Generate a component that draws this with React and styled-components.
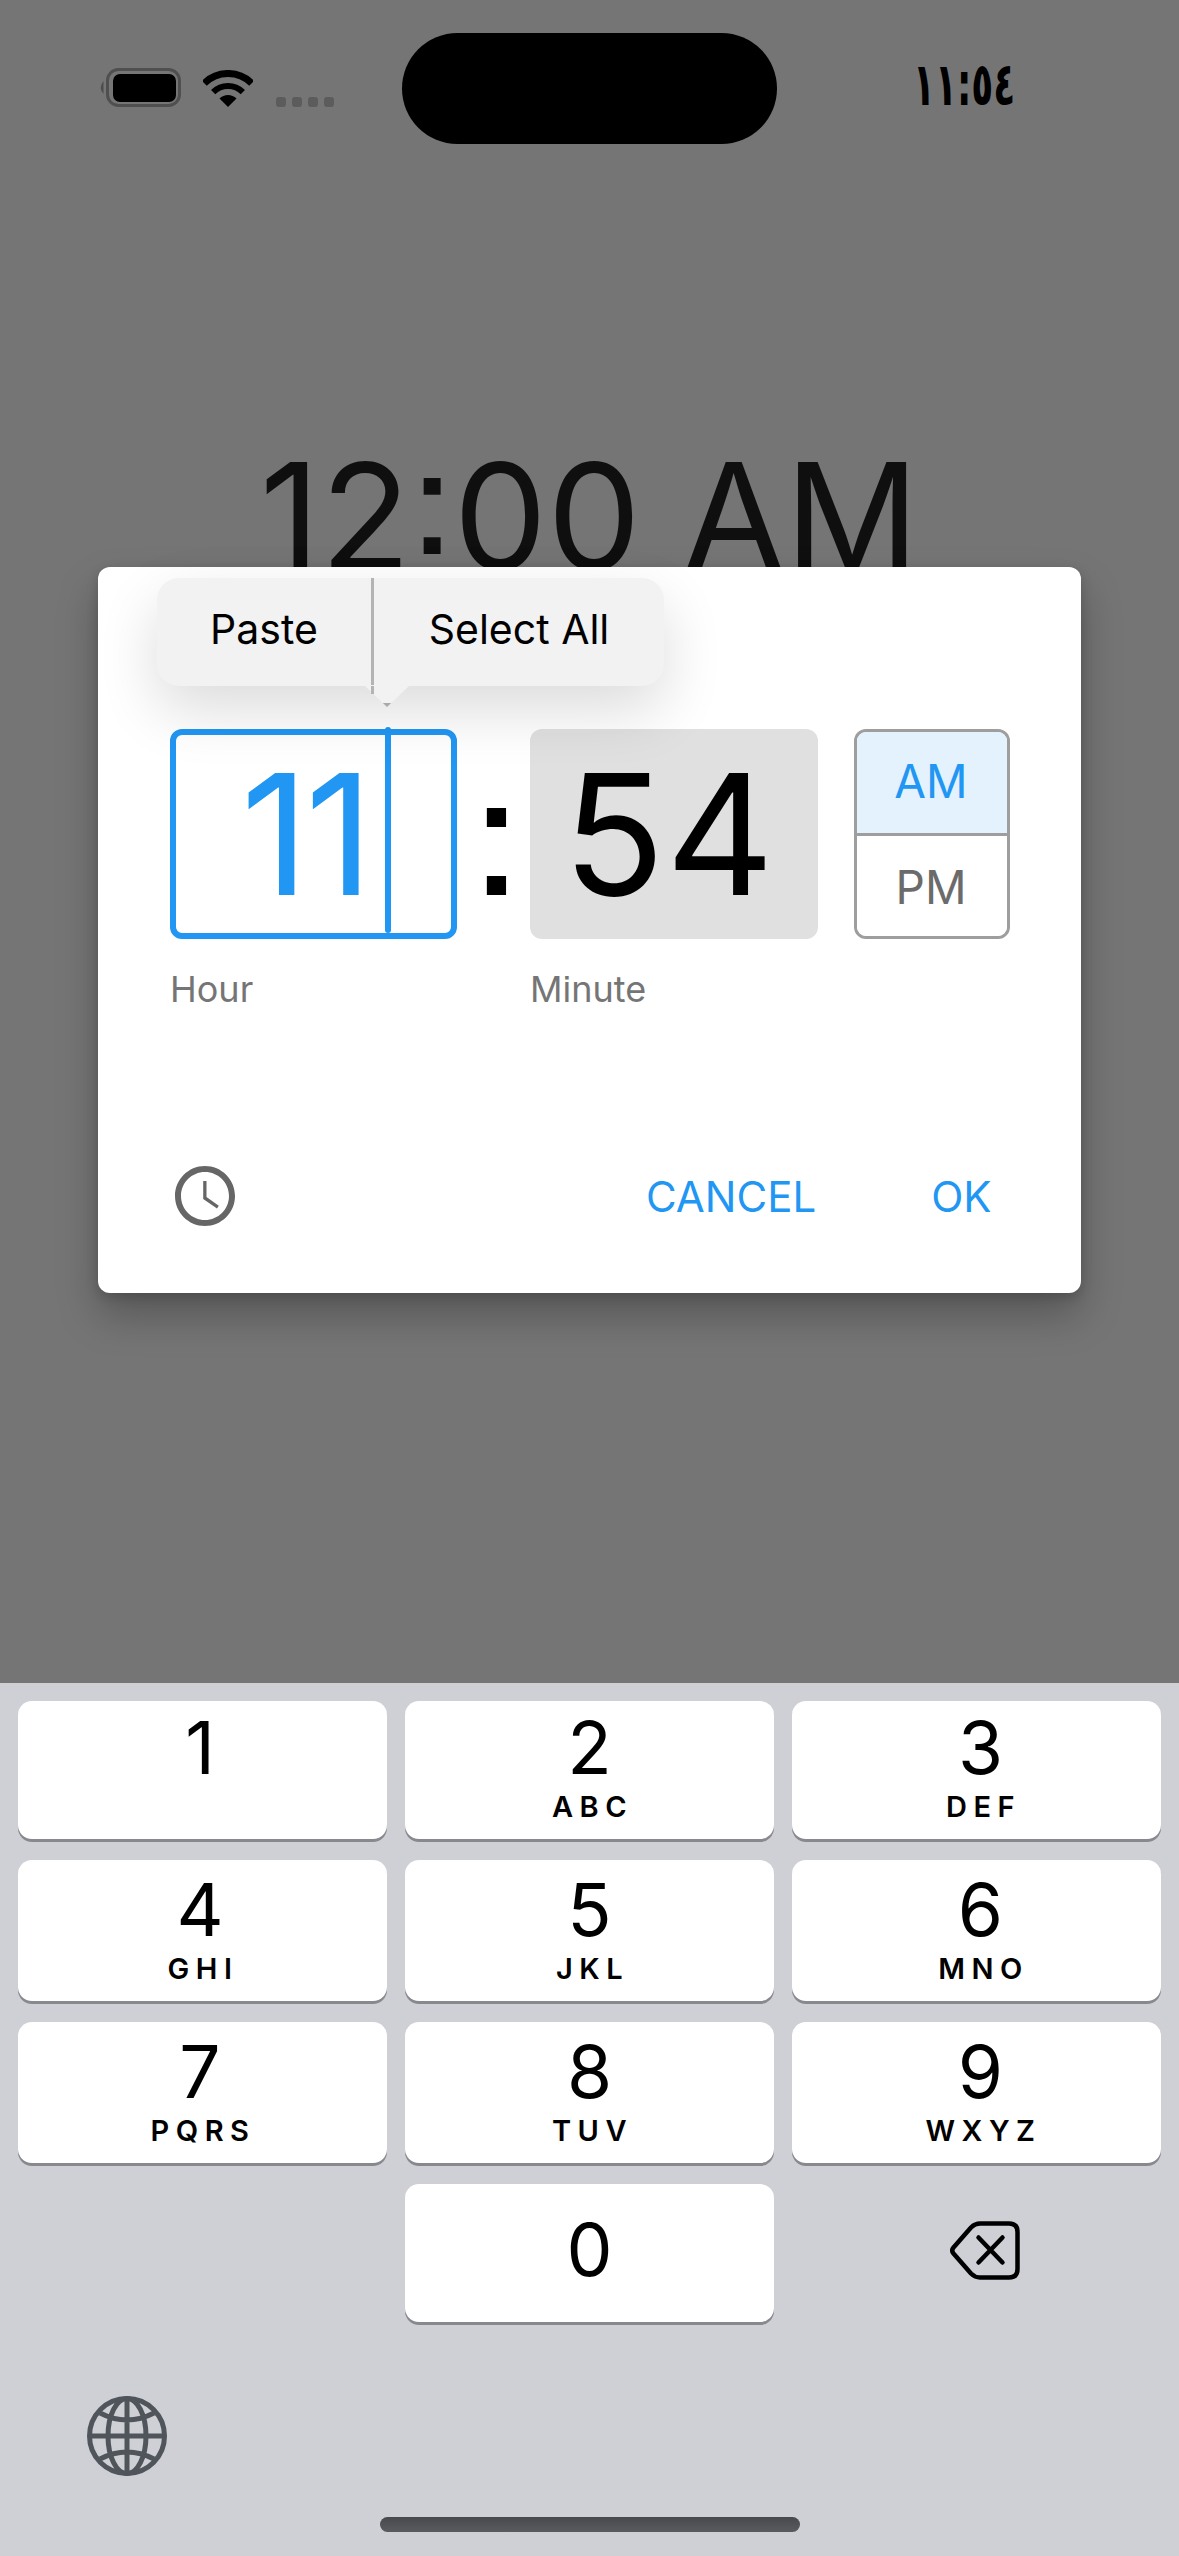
import React from "react";
import styled, { createGlobalStyle } from "styled-components";

const Global = createGlobalStyle`
  html, body { margin: 0; padding: 0; background: #757575; }
  * { box-sizing: border-box; }
  body { font-family: Inter, "Liberation Sans", sans-serif; font-feature-settings: "ss07" 1; }
`;

const Screen = styled.div`
  position: relative;
  width: 1179px;
  height: 2556px;
  display: flex;
  flex-direction: column;
  overflow: hidden;
  background: #757575;
`;
const Backdrop = styled.div`
  flex: 1;
  display: flex;
  flex-direction: column;
`;
const StatusBar = styled.div`
  display: grid;
  grid-template-columns: 304px 375px 1fr;
  align-items: start;
  padding: 33px 0 0 98px;
`;
const StatusLeft = styled.div`
  display: flex;
  align-items: flex-end;
  height: 74px;
  gap: 22px;
`;
const Dots = styled.div`
  display: flex;
  gap: 6px;
  margin-left: 1px;
`;
const Dot = styled.span`
  width: 10px;
  height: 10px;
  border-radius: 3px;
  background: #5c5c5c;
`;
const Island = styled.div`
  width: 375px;
  height: 111px;
  border-radius: 56px;
  background: #000;
`;
const Clock = styled.div`
  margin: 18px 0 0 136px;
  font: 700 60px/66px "DejaVu Sans", sans-serif;
  color: #000;
  transform: scaleX(0.6);
  transform-origin: left center;
`;
const Title = styled.div`
  margin-top: 284px;
  text-align: center;
  font-size: 148.5px;
  line-height: 176px;
  color: #0f0f0f;
`;
const Dialog = styled.div`
  position: absolute;
  left: 98px;
  top: 567px;
  width: 983px;
  height: 726px;
  display: flex;
  flex-direction: column;
  padding: 162px 71px 0 72px;
  background: #fff;
  border-radius: 12px;
  box-shadow: 0 22px 40px rgba(0, 0, 0, 0.26), 0 4px 12px rgba(0, 0, 0, 0.16);
`;
const Popup = styled.div`
  position: absolute;
  left: 59px;
  top: 11px;
  z-index: 2;
  display: flex;
  height: 108px;
  border-radius: 22px;
  background: #f2f2f2;
  box-shadow: 0 24px 60px rgba(0, 0, 0, 0.14);
`;
const PopupArrow = styled.span`
  position: absolute;
  left: 207px;
  top: 107px;
  width: 46px;
  height: 22px;
  background: linear-gradient(#f2f2f2 84%, #aaa 84%);
  clip-path: polygon(0 0, 100% 0, 50% 100%);
`;
const PopupItem = styled.div`
  position: relative;
  display: flex;
  align-items: center;
  justify-content: center;
  width: ${(p) => p.$w}px;
  padding-bottom: 7px;
  font-size: 41px;
  color: #000;
  ${(p) => p.$divided && `
    border-right: 3px solid #b4b4b4;
    &::after {
      content: "";
      position: absolute;
      right: -3px;
      top: 100%;
      z-index: 1;
      width: 3px;
      height: 8px;
      background: #b4b4b4;
    }
  `}
`;
const TimeRow = styled.div`
  display: flex;
  align-items: stretch;
  height: 210px;
`;
const Field = styled.div`
  position: relative;
  width: ${(p) => p.$w}px;
  border-radius: 12px;
  display: flex;
  align-items: center;
  justify-content: center;
  font-size: 168px;
  line-height: 1;
  background: ${(p) => (p.$active ? "#fff" : "#e0e0e0")};
  border: ${(p) => (p.$active ? "6px solid #2196f3" : "none")};
  color: ${(p) => (p.$active ? "#2196f3" : "#000")};
`;
const HourText = styled.span`
  margin-left: -17px;
  letter-spacing: -4px;
`;
const MinuteText = styled.span`
  margin-left: -10px;
  letter-spacing: 1px;
`;
const Caret = styled.span`
  position: absolute;
  left: 209px;
  top: -8px;
  bottom: 0;
  width: 6px;
  border-radius: 3px;
  background: #2196f3;
`;
const Colon = styled.div`
  width: 73px;
  display: flex;
  align-items: center;
  justify-content: center;
  padding-left: 6px;
  font-size: 168px;
  line-height: 1;
  color: #000;
`;
const Period = styled.div`
  margin-left: 36px;
  width: 156px;
  display: flex;
  flex-direction: column;
  border: 3px solid #9e9e9e;
  border-radius: 12px;
  overflow: hidden;
`;
const PeriodItem = styled.div`
  flex: 1;
  display: flex;
  align-items: center;
  justify-content: center;
  padding: ${(p) => (p.$on ? "0 2px 3px 0" : "2px 2px 0 0")};
  font-size: 46px;
  color: ${(p) => (p.$on ? "#2196f3" : "#6b6b6b")};
  background: ${(p) => (p.$on ? "#e3f2fd" : "#fff")};
  & + & {
    border-top: 3px solid #9e9e9e;
  }
`;
const Labels = styled.div`
  display: flex;
  margin-top: 28px;
  font-size: 36px;
  line-height: 44px;
  color: #757575;
`;
const FieldLabel = styled.div`
  width: ${(p) => p.$w}px;
`;
const Actions = styled.div`
  display: flex;
  align-items: center;
  margin-top: 149px;
`;
const ClockIcon = styled.svg`
  width: 72px;
  height: 72px;
  margin-left: -1px;
  fill: #666;
`;
const ActionButton = styled.div`
  margin-left: ${(p) => p.$ml};
  font-size: 42px;
  color: #2196f3;
`;
const Keyboard = styled.div`
  height: 873px;
  background: #ced0d5;
  padding-top: 18px;
  display: flex;
  flex-direction: column;
`;
const KeyGrid = styled.div`
  display: grid;
  grid-template-columns: repeat(3, 369px);
  grid-template-rows: 138px 141px 141px 138px;
  gap: 21px 18px;
  padding-left: 18px;
`;
const Key = styled.div`
  display: flex;
  flex-direction: column;
  align-items: center;
  padding: ${(p) => p.$top}px ${(p) => (p.$col === 0 ? 5 : 0)}px 0 ${(p) => (p.$col === 2 ? 8 : 0)}px;
  background: #fff;
  border-radius: 14px;
  box-shadow: 0 3px 0 #88898e;
  color: #000;
`;
const Digit = styled.div`
  font-size: 73px;
  line-height: 76px;
`;
const Letters = styled.div`
  margin-top: 6px;
  font-size: 29px;
  font-weight: 600;
  line-height: 30px;
  letter-spacing: 6.5px;
  margin-right: -6px;
`;
const Blank = styled.div``;
const BackspaceCell = styled.div`
  display: flex;
  align-items: center;
  justify-content: center;
  padding: 0 0 6px 16px;
`;
const Globe = styled.svg`
  display: block;
  width: 80px;
  height: 80px;
  margin: 74px 0 0 87px;
  fill: none;
  stroke: #50545b;
  stroke-width: 5;
`;
const HomeBar = styled.div`
  width: 420px;
  height: 15px;
  margin: 41px 0 0 380px;
  border-radius: 8px;
  background: linear-gradient(#48494c, #5a5b5f);
`;

const rows = [
  ["1", ""], ["2", "ABC"], ["3", "DEF"],
  ["4", "GHI"], ["5", "JKL"], ["6", "MNO"],
  ["7", "PQRS"], ["8", "TUV"], ["9", "WXYZ"],
];

export default function App() {
  return (
    <Screen>
      <Global />
      <Backdrop>
        <StatusBar>
          <StatusLeft>
            <svg width="83" height="39" viewBox="0 0 83 39">
              <path d="M5.5 13 Q0 19.5 5.5 26 Z" fill="#4d4d4d" />
              <rect x="9.5" y="1.5" width="72" height="36" rx="11" fill="none" stroke="#4f4f4f" strokeWidth="3" />
              <rect x="15" y="6" width="63" height="28" rx="7" fill="#000" />
            </svg>
            <svg width="50" height="37" viewBox="0 0 50 37" fill="none" stroke="#000">
              <path d="M1.3 13.3A33.5 33.5 0 0 1 48.7 13.3" strokeWidth="7" />
              <path d="M10.15 22.15A21 21 0 0 1 39.85 22.15" strokeWidth="6" />
              <path d="M25 37L16.5 28.5A12 12 0 0 1 33.5 28.5Z" fill="#000" stroke="none" />
            </svg>
            <Dots>
              <Dot /><Dot /><Dot /><Dot />
            </Dots>
          </StatusLeft>
          <Island />
          <Clock>١١:٥٤</Clock>
        </StatusBar>
        <Title>12:00 AM</Title>
      </Backdrop>

      <Dialog>
        <Popup>
          <PopupItem $w={217} $divided>Paste</PopupItem>
          <PopupItem $w={290}>Select All</PopupItem>
          <PopupArrow />
        </Popup>
        <TimeRow>
          <Field $w={287} $active>
            <HourText>11</HourText>
            <Caret />
          </Field>
          <Colon>:</Colon>
          <Field $w={288}><MinuteText>54</MinuteText></Field>
          <Period>
            <PeriodItem $on>AM</PeriodItem>
            <PeriodItem>PM</PeriodItem>
          </Period>
        </TimeRow>
        <Labels>
          <FieldLabel $w={360}>Hour</FieldLabel>
          <FieldLabel $w={288}>Minute</FieldLabel>
        </Labels>
        <Actions>
          <ClockIcon viewBox="0 0 24 24">
            <path d="M11.99 2C6.47 2 2 6.48 2 12s4.47 10 9.99 10C17.52 22 22 17.52 22 12S17.52 2 11.99 2zM12 20c-4.42 0-8-3.58-8-8s3.58-8 8-8 8 3.58 8 8-3.58 8-8 8z" />
            <path d="M12.5 7H11.4v6l4.6 3.15.6-.9-4.1-2.9z" />
          </ClockIcon>
          <ActionButton $ml="405px">CANCEL</ActionButton>
          <ActionButton $ml="115px">OK</ActionButton>
        </Actions>
      </Dialog>

      <Keyboard>
        <KeyGrid>
          {rows.map(([d, l], i) => (
            <Key key={d} $col={i % 3} $top={i < 3 ? 9 : 12}>
              <Digit>{d}</Digit>
              {l && <Letters>{l}</Letters>}
            </Key>
          ))}
          <Blank />
          <Key $top={28} $col={1}>
            <Digit>0</Digit>
          </Key>
          <BackspaceCell>
            <svg width="70" height="59" viewBox="0 0 70 59" fill="none" stroke="#000" strokeWidth="4.5" strokeLinecap="round" strokeLinejoin="round">
              <path d="M3.5 26.5 L21 6.5 Q25 2.5 30 2.5 L59 2.5 Q67.5 2.5 67.5 11 L67.5 48 Q67.5 56.5 59 56.5 L30 56.5 Q25 56.5 21 52.5 L3.5 32.5 Q1 29.5 3.5 26.5 Z" />
              <path d="M28.5 16.5 L52.5 41.5 M52.5 16.5 L28.5 41.5" />
            </svg>
          </BackspaceCell>
        </KeyGrid>
        <Globe viewBox="0 0 80 80">
          <circle cx="40" cy="40" r="37.5" />
          <ellipse cx="40" cy="40" rx="19" ry="37.5" />
          <path d="M40 2.5V77.5M2.5 40H77.5M13 17Q40 31 67 17M13 63Q40 49 67 63" />
        </Globe>
        <HomeBar />
      </Keyboard>
    </Screen>
  );
}
